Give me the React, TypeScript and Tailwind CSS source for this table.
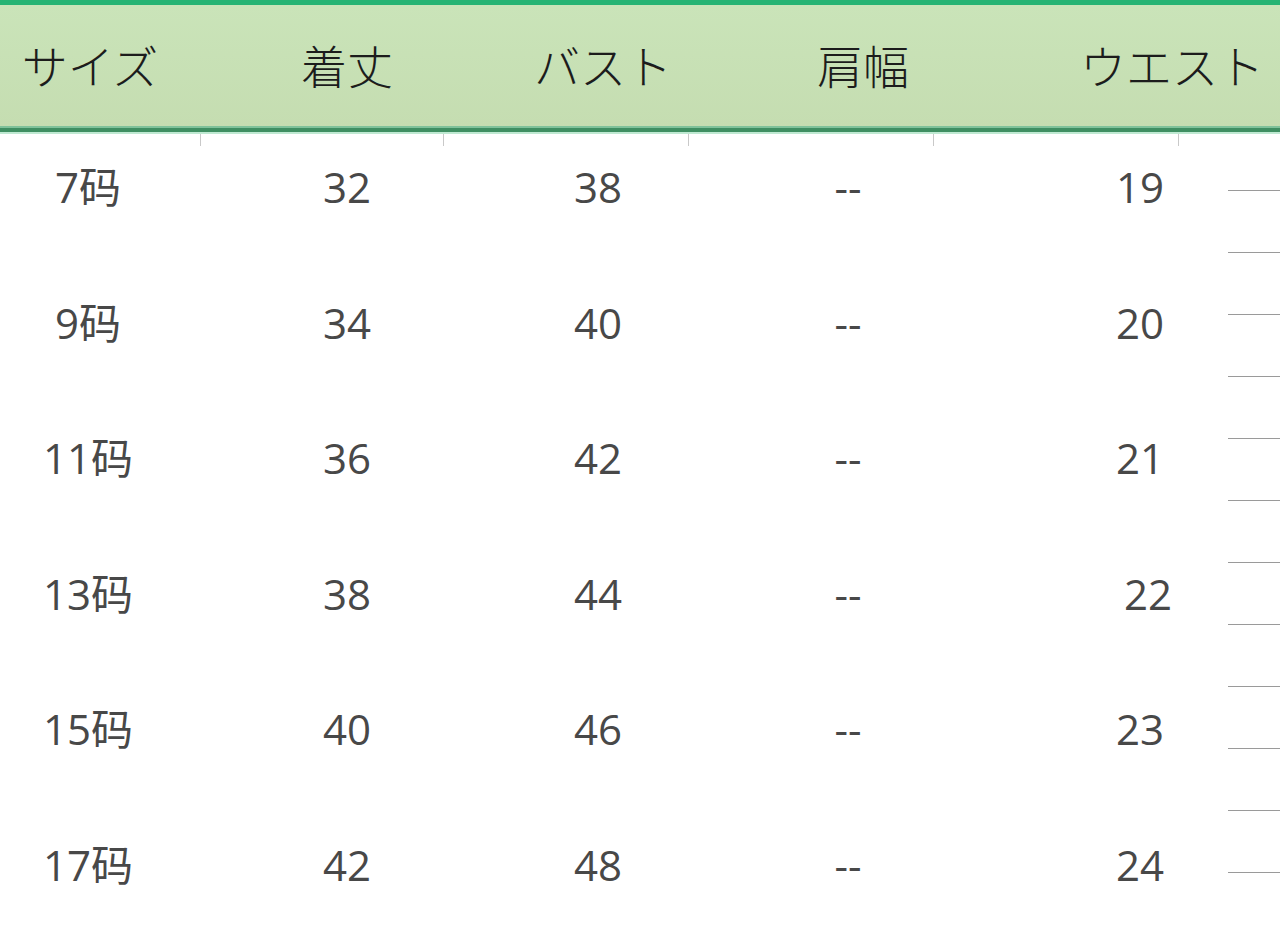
const headers = [
  { label: "サイズ", w: "w-[180px]" },
  { label: "着丈", w: "w-[334px]" },
  { label: "バスト", w: "w-[178px]" },
  { label: "肩幅", w: "w-[342px]" },
  { label: "ウエスト", w: "w-[276px]" },
];

const rows = [
  ["7码", "32", "38", "--", "19"],
  ["9码", "34", "40", "--", "20"],
  ["11码", "36", "42", "--", "21"],
  ["13码", "38", "44", "--", "22"],
  ["15码", "40", "46", "--", "23"],
  ["17码", "42", "48", "--", "24"],
];

const tickOffsets = ["ml-[200px]", "ml-[242px]", "ml-[244px]", "ml-[244px]", "ml-[244px]"];

export default function App() {
  return (
    <div
      className="w-[1280px] h-[932px] overflow-hidden bg-white"
      style={{ fontFamily: '"Open Sans", "Noto Sans CJK JP", "Noto Sans CJK SC", sans-serif' }}
    >
      {/* Header band */}
      <div className="h-[5px] bg-[#27b474]" />
      <div className="h-[121px] bg-gradient-to-b from-[#cae4b9] to-[#c5ddb1] flex items-center">
        <div className="flex w-[1310px] shrink-0 -mt-[4px]">
          {headers.map((h) => (
            <div
              key={h.label}
              className={`${h.w} shrink-0 text-center text-[46px] leading-none text-[#1c1c1c]`}
              style={{ fontFamily: '"Noto Sans CJK JP", sans-serif', fontWeight: 300 }}
            >
              {h.label}
            </div>
          ))}
        </div>
      </div>
      <div className="h-[2px] bg-[#7fc29a]" />
      <div className="h-[4px] bg-[#3f8f62]" />
      <div className="h-[2px] bg-[#bfe9d2]" />

      {/* Column ticks */}
      <div className="flex h-0">
        {tickOffsets.map((m, i) => (
          <div key={i} className={`${m} w-px h-[12px] bg-[#c9c9c9] shrink-0`} />
        ))}
      </div>

      {/* Body */}
      <div className="flex">
        <div className="flex flex-col gap-[79.6px] pt-[25px] w-[1228px] shrink-0">
          {rows.map((r) => (
            <div key={r[0]} className="flex h-[56px] items-center text-[42px] text-[#484848] leading-none">
              <div className="w-[176px] shrink-0 text-center">{r[0]}</div>
              <div className="w-[342px] shrink-0 text-center">{r[1]}</div>
              <div className="w-[160px] shrink-0 text-center">{r[2]}</div>
              <div className="w-[340px] shrink-0 text-center">{r[3]}</div>
              <div className={`w-[210px] shrink-0 text-right ${r[4] === "22" ? "pr-[56px]" : "pr-[64px]"}`}>
                {r[4]}
              </div>
            </div>
          ))}
        </div>

        {/* Faded guide lines on the right */}
        <div className="flex flex-col flex-1 pt-[56px] gap-[61px]">
          {Array.from({ length: 12 }).map((_, i) => (
            <div key={i} className="h-px bg-[#9a9a9a]" />
          ))}
        </div>
      </div>
    </div>
  );
}
